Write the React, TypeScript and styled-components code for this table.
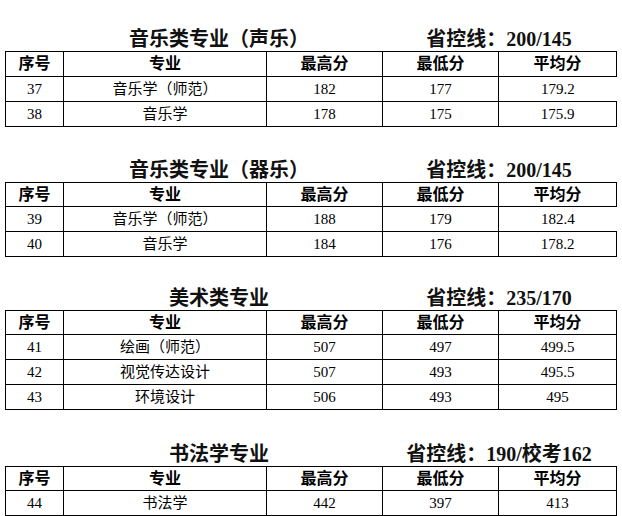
import React from 'react';
import styled, { createGlobalStyle } from 'styled-components';

const GlobalStyle = createGlobalStyle`
  html, body {
    margin: 0;
    padding: 0;
    background: #fff;
  }
  body {
    font-family: "Liberation Serif", "Noto Sans CJK SC", serif;
    color: #000;
  }
`;

const Page = styled.div`
  width: 622px;
  padding: 23px 0 0 5px;
  box-sizing: border-box;
  display: flex;
  flex-direction: column;
`;

const Section = styled.section<{ $space: number }>`
  display: flex;
  flex-direction: column;
  margin-top: ${(p) => p.$space}px;
`;

const TitleRow = styled.div`
  display: grid;
  grid-template-columns: 428px 132px;
  height: 28px;
  align-items: end;
`;

const TitleCell = styled.div`
  display: flex;
  justify-content: center;
  white-space: nowrap;
  font-family: "Liberation Serif", "Noto Sans CJK SC", serif;
  font-weight: bold;
  font-size: 20px;
  line-height: 24px;
  color: #111;
`;

const Table = styled.table`
  width: 611px;
  border-collapse: collapse;
  table-layout: fixed;
`;

const Row = styled.tr<{ $height: number; $openRight?: boolean }>`
  height: ${(p) => p.$height}px;

  & > td:last-child {
    border-right-style: ${(p) => (p.$openRight ? 'none' : 'solid')};
  }
`;

const Cell = styled.td<{ $head?: boolean }>`
  border: 1px solid #000;
  padding: 0;
  text-align: center;
  vertical-align: middle;
  font-family: "Liberation Serif", "Noto Sans CJK SC", serif;
  font-size: ${(p) => (p.$head ? '16px' : '15px')};
  font-weight: ${(p) => (p.$head ? 'bold' : 'normal')};
  line-height: 18px;
  color: #000;
`;

type Item = {
  no: number;
  major: string;
  max: string;
  min: string;
  avg: string;
  openRight?: boolean;
};

type Group = {
  title: string;
  line: string;
  space: number;
  head: number;
  rows: Item[];
};

const groups: Group[] = [
  {
    title: '音乐类专业（声乐）',
    line: '省控线：200/145',
    space: 0,
    head: 25,
    rows: [
      { no: 37, major: '音乐学（师范）', max: '182', min: '177', avg: '179.2', openRight: true },
      { no: 38, major: '音乐学', max: '178', min: '175', avg: '175.9' },
    ],
  },
  {
    title: '音乐类专业（器乐）',
    line: '省控线：200/145',
    space: 27,
    head: 24,
    rows: [
      { no: 39, major: '音乐学（师范）', max: '188', min: '179', avg: '182.4', openRight: true },
      { no: 40, major: '音乐学', max: '184', min: '176', avg: '178.2' },
    ],
  },
  {
    title: '美术类专业',
    line: '省控线：235/170',
    space: 25,
    head: 24,
    rows: [
      { no: 41, major: '绘画（师范）', max: '507', min: '497', avg: '499.5' },
      { no: 42, major: '视觉传达设计', max: '507', min: '493', avg: '495.5' },
      { no: 43, major: '环境设计', max: '506', min: '493', avg: '495' },
    ],
  },
  {
    title: '书法学专业',
    line: '省控线：190/校考162',
    space: 28,
    head: 24,
    rows: [{ no: 44, major: '书法学', max: '442', min: '397', avg: '413' }],
  },
];

const widths = [58, 203, 116, 116, 118];
const heads = ['序号', '专业', '最高分', '最低分', '平均分'];

const ScoreTable: React.FC<{ group: Group }> = ({ group }) => (
  <Section $space={group.space}>
    <TitleRow>
      <TitleCell>{group.title}</TitleCell>
      <TitleCell>{group.line}</TitleCell>
    </TitleRow>
    <Table>
      <colgroup>
        {widths.map((w, i) => (
          <col key={i} style={{ width: w }} />
        ))}
      </colgroup>
      <tbody>
        <Row $height={group.head}>
          {heads.map((h) => (
            <Cell key={h} $head>
              {h}
            </Cell>
          ))}
        </Row>
        {group.rows.map((r) => (
          <Row key={r.no} $height={25} $openRight={r.openRight}>
            <Cell>{r.no}</Cell>
            <Cell>{r.major}</Cell>
            <Cell>{r.max}</Cell>
            <Cell>{r.min}</Cell>
            <Cell>{r.avg}</Cell>
          </Row>
        ))}
      </tbody>
    </Table>
  </Section>
);

const App: React.FC = () => (
  <>
    <GlobalStyle />
    <Page>
      {groups.map((g) => (
        <ScoreTable key={g.title} group={g} />
      ))}
    </Page>
  </>
);

export default App;
